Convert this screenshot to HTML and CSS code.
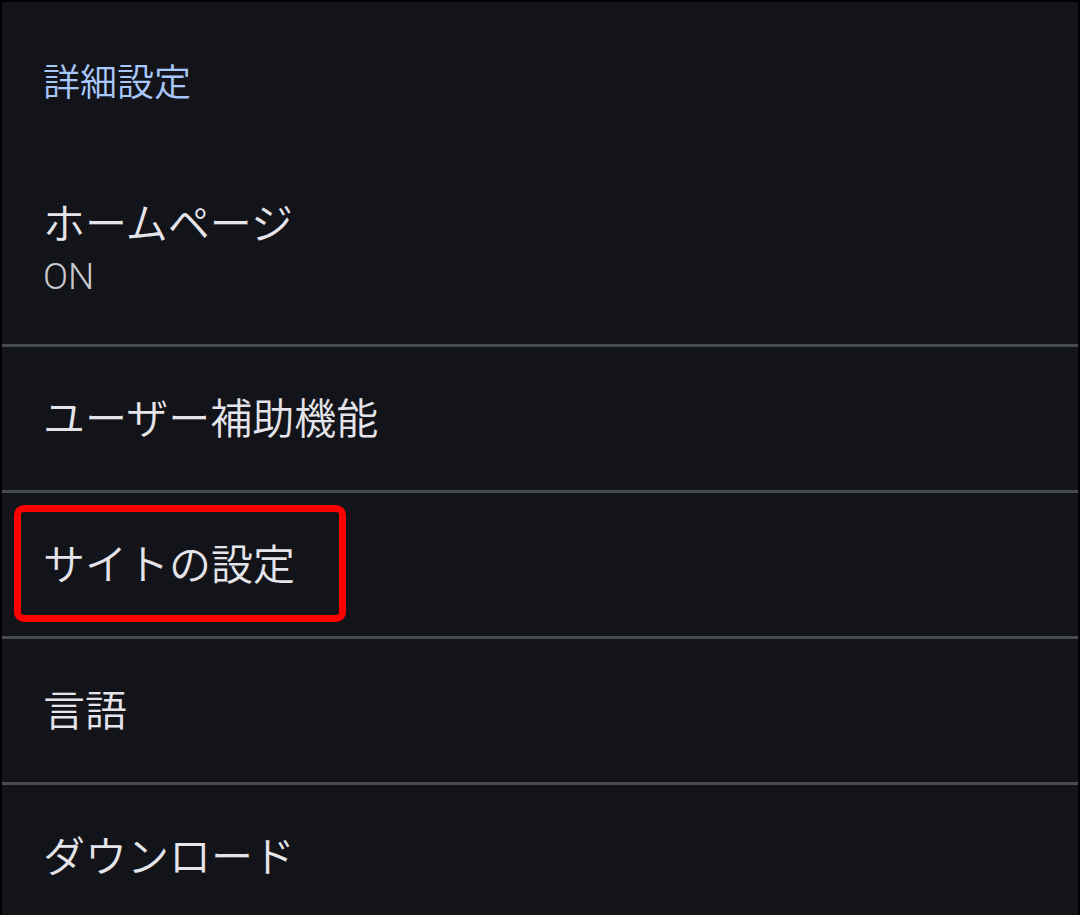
FILE: index.html
```html
<!DOCTYPE html>
<html lang="ja">
<head>
<meta charset="utf-8">
<link rel="stylesheet" href="styles.css">
</head>
<body>
<div class="screen">
  <div class="section-title">詳細設定</div>
  <div class="item item-two">
    <div class="item-title">ホームページ</div>
    <div class="item-sub">ON</div>
  </div>
  <div class="item">
    <div class="item-title">ユーザー補助機能</div>
  </div>
  <div class="item item-marked">
    <div class="item-title">サイトの設定</div>
    <div class="mark"></div>
  </div>
  <div class="item">
    <div class="item-title">言語</div>
  </div>
  <div class="item item-last">
    <div class="item-title">ダウンロード</div>
  </div>
</div>
</body>
</html>
```
FILE: styles.css
```css
html, body {
  margin: 0;
  padding: 0;
  background: #131419;
}
.screen {
  width: 1080px;
  height: 915px;
  box-sizing: border-box;
  border: 2px solid #000;
  border-bottom: none;
  background: #131419;
  font-family: "Noto Sans CJK JP", "Noto Sans", sans-serif;
  overflow: hidden;
}
.section-title {
  color: #a8c7fa;
  font-size: 37px;
  font-weight: 350;
  line-height: 48px;
  padding: 54px 0 0 41px;
  height: 48px;
}
.item {
  position: relative;
  height: 138px;
  padding-bottom: 5px;
  border-bottom: 3px solid #474a52;
  display: flex;
  flex-direction: column;
  justify-content: center;
  padding-left: 41px;
  color: #e4e4ea;
}
.item-two {
  padding-top: 89px;
  padding-bottom: 0;
  justify-content: flex-start;
  height: 151px;
}
.item-title {
  font-size: 42px;
  font-weight: 350;
  line-height: 56px;
}
.item-sub {
  font-family: Roboto, "Noto Sans", sans-serif;
  font-size: 37px;
  font-weight: 300;
  line-height: 56px;
  color: #c7c8cd;
}
.item-last {
  border-bottom: none;
}
.mark {
  position: absolute;
  left: 12px;
  top: 12px;
  width: 332px;
  height: 117px;
  box-sizing: border-box;
  border: 7px solid #ff0000;
  border-radius: 10px;
}
```
